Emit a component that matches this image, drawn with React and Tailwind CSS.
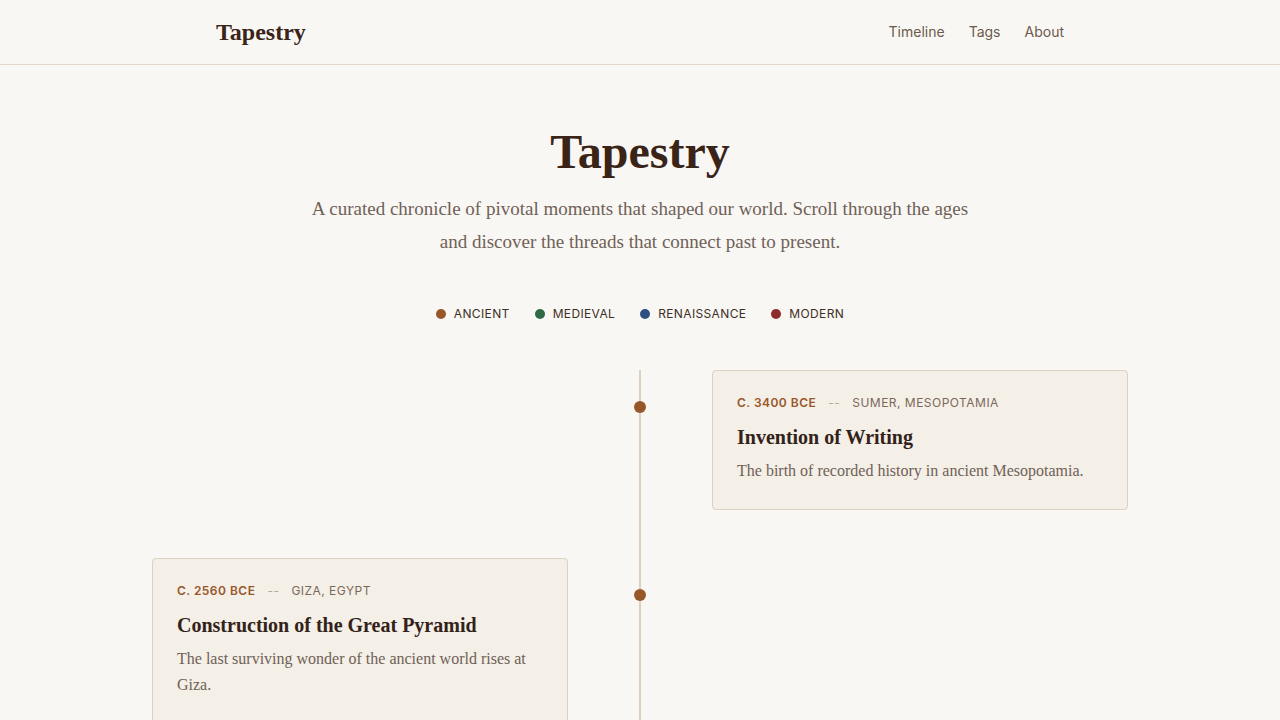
import { Fragment } from "react";

const serif = "font-['Liberation_Serif',serif]";
const sans = "font-['Inter',sans-serif]";

const eras = [
  { name: "Ancient", color: "bg-[#98572b]" },
  { name: "Medieval", color: "bg-[#2f6a44]" },
  { name: "Renaissance", color: "bg-[#2c4f7f]" },
  { name: "Modern", color: "bg-[#8e2c2c]" },
];

const events = [
  {
    date: "c. 3400 BCE",
    place: "Sumer, Mesopotamia",
    title: "Invention of Writing",
    text: "The birth of recorded history in ancient Mesopotamia.",
    side: "right",
  },
  {
    date: "c. 2560 BCE",
    place: "Giza, Egypt",
    title: "Construction of the Great Pyramid",
    text: "The last surviving wonder of the ancient world rises at Giza.",
    side: "left",
  },
];

const EventCard = ({ ev }) => (
  <div className="bg-[#f4efe7] border border-[#ddd1c1] rounded p-6 pb-[25px]">
    <div className={`${sans} flex items-center text-xs uppercase tracking-[0.04em] leading-4`}>
      <span className="font-semibold text-[#98572b]">{ev.date}</span>
      <span className="mx-3 text-[#b8a898]">--</span>
      <span className="text-[#7b685b]">{ev.place}</span>
    </div>
    <h3 className={`${serif} mt-3 text-[20px] leading-7 font-bold text-[#33221a]`}>
      {ev.title}
    </h3>
    <p className={`${serif} mt-[7px] text-[16px] leading-[26px] text-[#6f6158]`}>{ev.text}</p>
  </div>
);

export default function App() {
  return (
    <div className="min-h-screen bg-[#f9f7f3]">
      {/* Header */}
      <header className="border-b border-[#e2d8cb]">
        <div className="max-w-4xl mx-auto px-6 h-16 flex items-center justify-between">
          <span className={`${serif} text-2xl font-bold text-[#3a2417]`}>Tapestry</span>
          <nav className={`${sans} flex gap-6 text-sm text-[#6b5a4e]`}>
            <a>Timeline</a>
            <a>Tags</a>
            <a>About</a>
          </nav>
        </div>
      </header>

      {/* Hero */}
      <section className="pt-[58px] text-center">
        <h1 className={`${serif} text-5xl leading-[58px] font-bold text-[#3a2417]`}>Tapestry</h1>
        <p className={`${serif} mt-[11px] mx-auto max-w-[680px] text-[19px] leading-[33px] text-[#6f6158]`}>
          A curated chronicle of pivotal moments that shaped our world. Scroll through the ages and
          discover the threads that connect past to present.
        </p>
        <div className={`${sans} mt-[48px] flex justify-center gap-[25px] text-xs leading-4 tracking-[0.03em] uppercase text-[#3d2f27]`}>
          {eras.map((e) => (
            <div key={e.name} className="flex items-center gap-2">
              <span className={`w-[10px] h-[10px] rounded-full ${e.color}`} />
              {e.name}
            </div>
          ))}
        </div>
      </section>

      {/* Timeline */}
      <section className="relative max-w-5xl mx-auto px-6 mt-12 pb-16">
        <div className="absolute left-1/2 top-0 bottom-0 w-[2px] -translate-x-1/2 bg-[#ddd0bf]" />
        <div className="grid grid-cols-[1fr_144px_1fr] gap-y-12">
          {events.map((ev) => (
            <Fragment key={ev.title}>
              <div>{ev.side === "left" && <EventCard ev={ev} />}</div>
              <div className="relative flex justify-center">
                <span className="mt-[31px] w-3 h-3 rounded-full bg-[#98572b]" />
              </div>
              <div>{ev.side === "right" && <EventCard ev={ev} />}</div>
            </Fragment>
          ))}
        </div>
      </section>
    </div>
  );
}
